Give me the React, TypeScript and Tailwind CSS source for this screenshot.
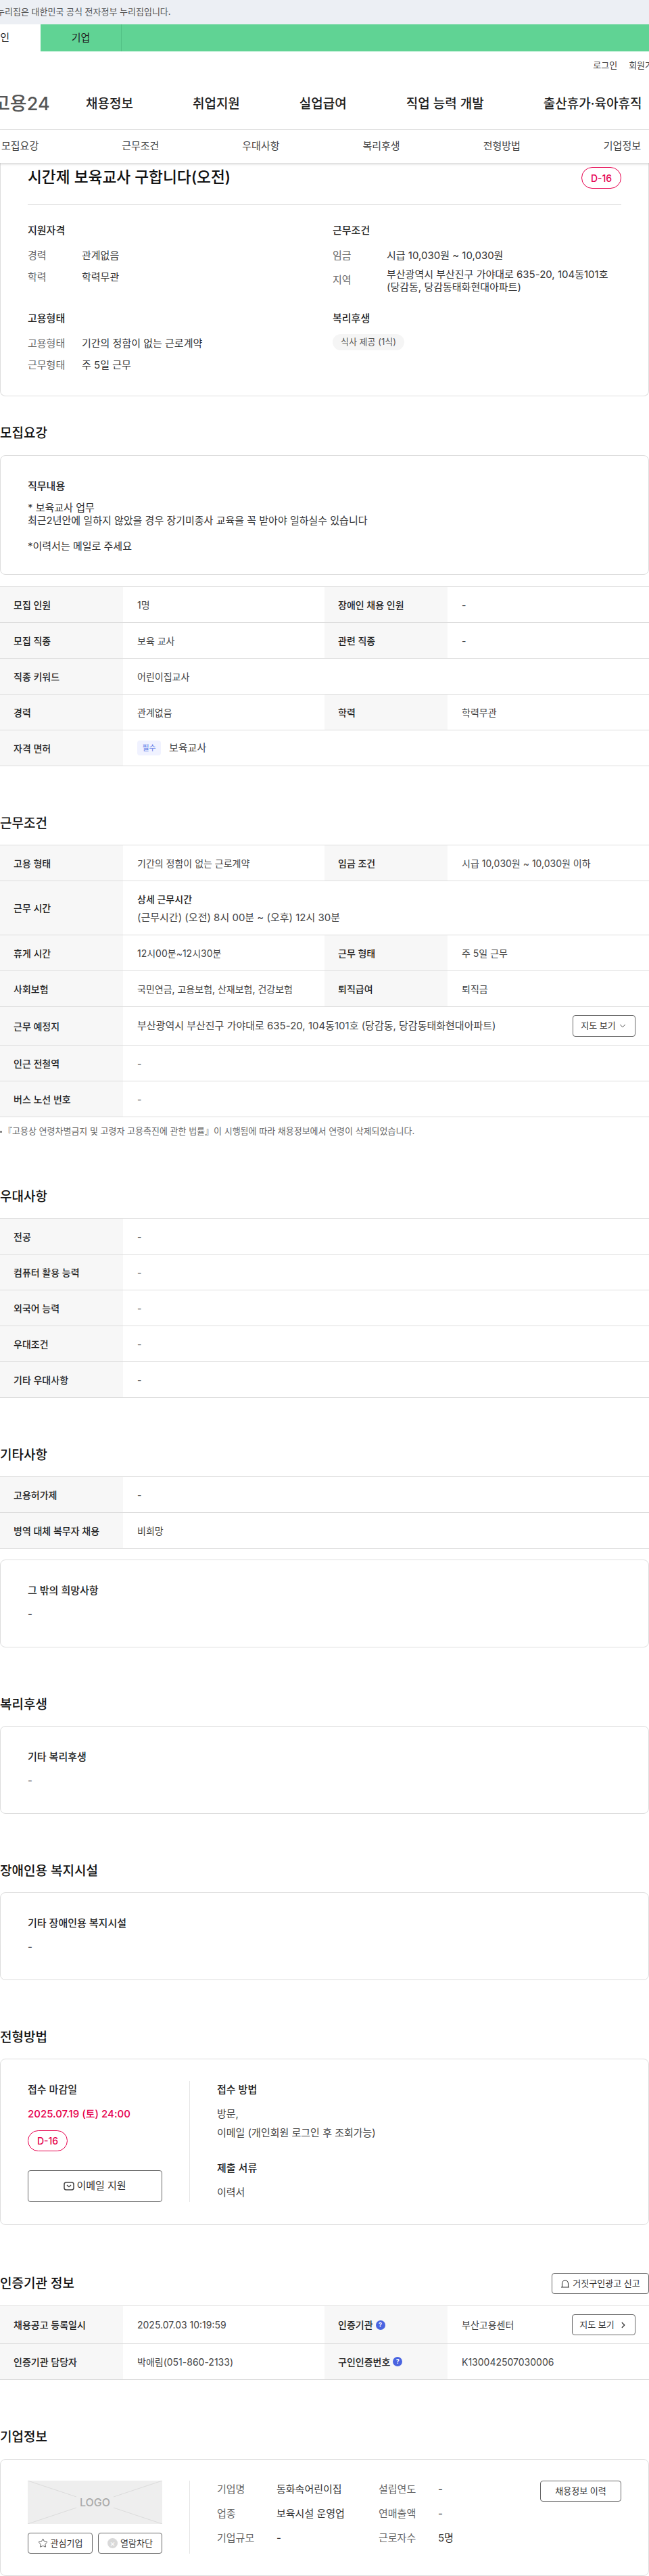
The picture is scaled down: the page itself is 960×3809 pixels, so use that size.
import { ReactNode } from "react";
import { ChevronDown, ChevronRight, Star } from "lucide-react";

const FONT = "font-['Inter','Noto_Sans_CJK_KR','Noto_Sans',sans-serif]";

const nav = ["채용정보", "취업지원", "실업급여", "직업 능력 개발", "출산휴가·육아휴직"];
const subNav = ["모집요강", "근무조건", "우대사항", "복리후생", "전형방법", "기업정보"];

function Cell({ label, children, h = "h-[52px]" }: { label: ReactNode; children?: ReactNode; h?: string }) {
  return (
    <div className={`flex flex-1 min-w-0 ${h}`}>
      <div className="w-[182px] shrink-0 bg-[#f7f7f7] pl-5 flex items-center font-medium text-[#222] gap-1">{label}</div>
      <div className="flex-1 min-w-0 pl-[21px] flex items-center text-[#444]">{children}</div>
    </div>
  );
}

function Row({ children }: { children: ReactNode }) {
  return <div className="flex border-b border-[#ddd]">{children}</div>;
}

function Table({ children }: { children: ReactNode }) {
  return <div className="border-t border-[#ddd]">{children}</div>;
}

function Heading({ children }: { children: ReactNode }) {
  return <h2 className="text-[19px] leading-[32px] font-medium text-[#111]">{children}</h2>;
}

function InfoBox({ title, value }: { title: string; value: string }) {
  return (
    <div className="border border-[#ddd] rounded-[8px] h-[130px] px-10 pt-[33px] text-[15px]">
      <div className="font-medium text-[#222] leading-6">{title}</div>
      <div className="text-[#444] mt-[11px] leading-6">{value}</div>
    </div>
  );
}

function Pair({ label, value }: { label: string; value: string }) {
  return (
    <div className="flex h-[32px] items-center">
      <span className="w-[80px] text-[#666]">{label}</span>
      <span className="text-[#333]">{value}</span>
    </div>
  );
}

function QuestionDot() {
  return (
    <span className="w-[14px] h-[14px] rounded-full bg-[#4a64e0] text-white text-[9px] font-bold flex items-center justify-center">?</span>
  );
}

function DayBadge({ className }: { className: string }) {
  return (
    <span className={`border border-[#e6004d] rounded-full text-[#e6004d] flex items-center justify-center text-[14px] font-medium ${className}`}>
      D-16
    </span>
  );
}

function CompanyPair({ label, value }: { label: string; value: string }) {
  return (
    <div className="flex h-[36px] items-center">
      <span className="w-[88px] text-[#666]">{label}</span>
      <span className="text-[#333]">{value}</span>
    </div>
  );
}

export default function App() {
  return (
    <div className={`${FONT} w-[960px] h-[3809px] overflow-hidden bg-white text-[14px] text-[#333]`}>
      {/* top banner */}
      <div className="h-9 bg-[#eceff4] flex items-center text-[13px] text-[#555] -ml-[5px]">
        <span>누리집은 대한민국 공식 전자정부 누리집입니다.</span>
      </div>
      <div className="h-10 bg-[#60d394] flex text-[15px] text-[#222]">
        <div className="w-[60px] bg-white flex items-center justify-end pr-[46px]">인</div>
        <div className="w-[120px] border-r border-[#52c084] flex items-center justify-center">기업</div>
      </div>

      {/* header */}
      <div className="h-[116px] border-b border-[#e5e5e5]">
        <div className="flex justify-end gap-[17px] pt-[11px] text-[13px] text-[#444] -mr-[18px] leading-[18px]">
          <span>로그인</span>
          <span>회원가입</span>
        </div>
        <div className="flex items-center mt-[31px] h-[36px] whitespace-nowrap">
          <span className="w-[137px] -ml-[10px] text-[27px] font-medium text-[#555] shrink-0">고용24</span>
          <div className="flex gap-[88px] text-[19px] font-medium text-[#222]">
            {nav.map((n) => (
              <span key={n}>{n}</span>
            ))}
          </div>
        </div>
      </div>
      <div className="h-[49px] flex justify-between items-center pl-[2px] pr-[12px] text-[#444] text-[15px] shadow-[0_2px_3px_rgba(0,0,0,0.15)] relative z-10">
        {subNav.map((n) => (
          <span key={n}>{n}</span>
        ))}
      </div>

      {/* summary card */}
      <div className="border border-t-0 border-[#ddd] rounded-b-[8px] h-[345px] px-10 text-[15px]">
        <div className="flex justify-between h-[62px] border-b border-[#e5e5e5] items-start">
          <h1 className="text-[22.7px] leading-[42px] font-medium text-[#111]">시간제 보육교사 구합니다(오전)</h1>
          <DayBadge className="w-[59px] h-[32px] mt-[6px]" />
        </div>
        <div className="flex pt-[26px]">
          <div className="w-[451px]">
            <div className="font-medium text-[#222] leading-6 mb-[9px]">지원자격</div>
            <Pair label="경력" value="관계없음" />
            <Pair label="학력" value="학력무관" />
            <div className="font-medium text-[#222] leading-6 mt-[33px] mb-[9px]">고용형태</div>
            <Pair label="고용형태" value="기간의 정함이 없는 근로계약" />
            <Pair label="근무형태" value="주 5일 근무" />
          </div>
          <div className="flex-1">
            <div className="font-medium text-[#222] leading-6 mb-[9px]">근무조건</div>
            <Pair label="임금" value="시급 10,030원 ~ 10,030원" />
            <div className="flex items-center h-[41px]">
              <span className="w-[80px] text-[#666] shrink-0">지역</span>
              <span className="text-[#333] leading-[19px]">
                부산광역시 부산진구 가야대로 635-20, 104동101호
                <br />
                (당감동, 당감동태화현대아파트)
              </span>
            </div>
            <div className="font-medium text-[#222] leading-6 mt-[24px] mb-[11px]">복리후생</div>
            <span className="inline-flex items-center h-[24px] px-3 rounded-full bg-[#f5f5f5] text-[13px] text-[#555]">식사 제공 (1식)</span>
          </div>
        </div>
      </div>

      {/* 모집요강 */}
      <div className="mt-[39px]">
        <Heading>모집요강</Heading>
      </div>
      <div className="mt-[16px] border border-[#ddd] rounded-[8px] h-[177px] px-10 pt-[33px] text-[15px] text-[#333] leading-[19px]">
        <div className="font-medium text-[#222] leading-6 mb-[10px]">직무내용</div>
        <div>* 보육교사 업무</div>
        <div>최근2년안에 일하지 않았을 경우 장기미종사 교육을 꼭 받아야 일하실수 있습니다</div>
        <div className="mt-[19px]">*이력서는 메일로 주세요</div>
      </div>
      <div className="mt-[17px]">
        <Table>
          <Row>
            <Cell label="모집 인원">1명</Cell>
            <Cell label="장애인 채용 인원">-</Cell>
          </Row>
          <Row>
            <Cell label="모집 직종">보육 교사</Cell>
            <Cell label="관련 직종">-</Cell>
          </Row>
          <Row>
            <Cell label="직종 키워드">어린이집교사</Cell>
          </Row>
          <Row>
            <Cell label="경력">관계없음</Cell>
            <Cell label="학력">학력무관</Cell>
          </Row>
          <Row>
            <Cell label="자격 면허">
              <span className="w-[35px] h-[22px] rounded-[4px] bg-[#f0f2ff] text-[#5a78e6] text-[11px] flex items-center justify-center mr-[12px]">필수</span>
              <span className="text-[15px]">보육교사</span>
            </Cell>
          </Row>
        </Table>
      </div>

      {/* 근무조건 */}
      <div className="mt-[69px]">
        <Heading>근무조건</Heading>
      </div>
      <div className="mt-[15px]">
        <Table>
          <Row>
            <Cell label="고용 형태">기간의 정함이 없는 근로계약</Cell>
            <Cell label="임금 조건">시급 10,030원 ~ 10,030원 이하</Cell>
          </Row>
          <Row>
            <Cell label="근무 시간" h="h-[79px]">
              <div className="leading-[27px]">
                <div className="font-medium text-[#222]">상세 근무시간</div>
                <div className="text-[15px]">(근무시간) (오전) 8시 00분 ~ (오후) 12시 30분</div>
              </div>
            </Cell>
          </Row>
          <Row>
            <Cell label="휴게 시간">12시00분~12시30분</Cell>
            <Cell label="근무 형태">주 5일 근무</Cell>
          </Row>
          <Row>
            <Cell label="사회보험">국민연금, 고용보험, 산재보험, 건강보험</Cell>
            <Cell label="퇴직급여">퇴직금</Cell>
          </Row>
          <Row>
            <Cell label="근무 예정지" h="h-[56px]">
              <span className="flex-1 text-[15px]">부산광역시 부산진구 가야대로 635-20, 104동101호 (당감동, 당감동태화현대아파트)</span>
              <button className="w-[93px] h-[32px] mr-[20px] border border-[#666] rounded-[4px] text-[13px] text-[#333] flex items-center justify-center gap-[3px]">
                지도 보기
                <ChevronDown size={14} strokeWidth={1.5} />
              </button>
            </Cell>
          </Row>
          <Row>
            <Cell label="인근 전철역">-</Cell>
          </Row>
          <Row>
            <Cell label="버스 노선 번호">-</Cell>
          </Row>
        </Table>
      </div>
      <div className="flex items-center h-[20px] mt-[11px] text-[13px] text-[#666]">
        <span className="w-[3px] h-[3px] rounded-full bg-[#666] mr-[2px]" />
        <span>『고용상 연령차별금지 및 고령자 고용촉진에 관한 법률』이 시행됨에 따라 채용정보에서 연령이 삭제되었습니다.</span>
      </div>

      {/* 우대사항 */}
      <div className="mt-[71px]">
        <Heading>우대사항</Heading>
      </div>
      <div className="mt-[15px]">
        <Table>
          {["전공", "컴퓨터 활용 능력", "외국어 능력", "우대조건", "기타 우대사항"].map((l) => (
            <Row key={l}>
              <Cell label={l}>-</Cell>
            </Row>
          ))}
        </Table>
      </div>

      {/* 기타사항 */}
      <div className="mt-[69px]">
        <Heading>기타사항</Heading>
      </div>
      <div className="mt-[15px]">
        <Table>
          <Row>
            <Cell label="고용허가제">-</Cell>
          </Row>
          <Row>
            <Cell label="병역 대체 복무자 채용">비희망</Cell>
          </Row>
        </Table>
      </div>
      <div className="mt-[16px]">
        <InfoBox title="그 밖의 희망사항" value="-" />
      </div>

      {/* 복리후생 */}
      <div className="mt-[69px]">
        <Heading>복리후생</Heading>
      </div>
      <div className="mt-[15px]">
        <InfoBox title="기타 복리후생" value="-" />
      </div>

      {/* 장애인용 복지시설 */}
      <div className="mt-[69px]">
        <Heading>장애인용 복지시설</Heading>
      </div>
      <div className="mt-[15px]">
        <InfoBox title="기타 장애인용 복지시설" value="-" />
      </div>

      {/* 전형방법 */}
      <div className="mt-[69px]">
        <Heading>전형방법</Heading>
      </div>
      <div className="mt-[15px] border border-[#ddd] rounded-[8px] h-[246px] pl-10 pt-[32px] flex text-[15px]">
        <div className="w-[240px] h-[179px] border-r border-[#e5e5e5]">
          <div className="font-medium text-[#222] leading-6 mt-[1px]">접수 마감일</div>
          <div className="text-[#e6004d] font-medium leading-6 mt-[12px]">2025.07.19 (토) 24:00</div>
          <DayBadge className="w-[59px] h-[31px] mt-[12px]" />
          <button className="w-[199px] h-[47px] mt-[28px] border border-[#666] rounded-[4px] flex items-center justify-center gap-[3px] text-[#333]">
            <svg width="16" height="13" viewBox="0 0 16 13" fill="none" stroke="#444" strokeWidth="1.5">
              <rect x="1" y="1" width="14" height="11" rx="3" />
              <path d="M5 5l3 2.5L11 5" />
            </svg>
            이메일 지원
          </button>
        </div>
        <div className="pl-10 text-[#444]">
          <div className="font-medium text-[#222] leading-6 mt-[1px]">접수 방법</div>
          <div className="mt-[10px] leading-[28px]">
            <div className="h-[28px]">방문,</div>
            <div>이메일 (개인회원 로그인 후 조회가능)</div>
          </div>
          <div className="font-medium text-[#222] leading-6 mt-[26px]">제출 서류</div>
          <div className="mt-[12px] leading-6">이력서</div>
        </div>
      </div>

      {/* 인증기관 정보 */}
      <div className="mt-[71px] flex justify-between items-center h-[31px]">
        <Heading>인증기관 정보</Heading>
        <button className="w-[144px] h-[31px] border border-[#666] rounded-[4px] text-[13px] text-[#333] flex items-center justify-center gap-[4px]">
          <svg width="14" height="13" viewBox="0 0 14 13" fill="none" stroke="#333" strokeWidth="1.1">
            <path d="M2.5 12V6.5a4.5 4.5 0 0 1 9 0V12M1 12h12" />
          </svg>
          거짓구인광고 신고
        </button>
      </div>
      <div className="mt-[17px]">
        <Table>
          <Row>
            <Cell label="채용공고 등록일시" h="h-[55px]">2025.07.03 10:19:59</Cell>
            <Cell
              label={
                <>
                  인증기관
                  <QuestionDot />
                </>
              }
              h="h-[55px]"
            >
              <span className="flex-1">부산고용센터</span>
              <button className="w-[94px] h-[31px] mr-[20px] border border-[#666] rounded-[4px] text-[13px] text-[#333] flex items-center justify-center gap-[6px]">
                지도 보기
                <ChevronRight size={14} strokeWidth={2.2} />
              </button>
            </Cell>
          </Row>
          <Row>
            <Cell label="인증기관 담당자">박애림(051-860-2133)</Cell>
            <Cell
              label={
                <>
                  구인인증번호
                  <QuestionDot />
                </>
              }
            >
              K130042507030006
            </Cell>
          </Row>
        </Table>
      </div>

      {/* 기업정보 */}
      <div className="mt-[69px]">
        <Heading>기업정보</Heading>
      </div>
      <div className="mt-[16px] border border-[#ddd] rounded-[8px] h-[173px] pl-10 pt-[31px] flex text-[15px]">
        <div className="w-[240px] h-[108px] border-r border-[#e5e5e5]">
          <div className="w-[199px] h-[64px] bg-[#eeeeee] relative flex items-center justify-center">
            <svg className="absolute inset-0" width="199" height="64" viewBox="0 0 199 64" fill="none" stroke="#dcdcdc">
              <path d="M0 0 72 24M199 0l-72 24M0 64l72-24M199 64l-72-24" />
            </svg>
            <span className="relative text-[16px] font-medium text-[#aaa]">LOGO</span>
          </div>
          <div className="flex gap-2 mt-[13px] text-[13px]">
            <button className="w-[96px] h-[31px] border border-[#666] rounded-[4px] flex items-center justify-center gap-1">
              <Star size={15} strokeWidth={1.3} />
              관심기업
            </button>
            <button className="w-[95px] h-[31px] border border-[#666] rounded-[4px] flex items-center justify-center gap-1">
              <span className="w-[15px] h-[15px] rounded-full bg-[#d9d9d9] text-white text-[12px] leading-none flex items-center justify-center">×</span>
              열람차단
            </button>
          </div>
        </div>
        <div className="pl-10 flex-1 flex items-start justify-between pr-10">
          <div className="grid grid-cols-[239px_1fr] w-[420px] -mt-[5px]">
            <CompanyPair label="기업명" value="동화속어린이집" />
            <CompanyPair label="설립연도" value="-" />
            <CompanyPair label="업종" value="보육시설 운영업" />
            <CompanyPair label="연매출액" value="-" />
            <CompanyPair label="기업규모" value="-" />
            <CompanyPair label="근로자수" value="5명" />
          </div>
          <button className="w-[120px] h-[31px] border border-[#666] rounded-[4px] text-[13px] text-[#333] flex items-center justify-center">채용정보 이력</button>
        </div>
      </div>
    </div>
  );
}
